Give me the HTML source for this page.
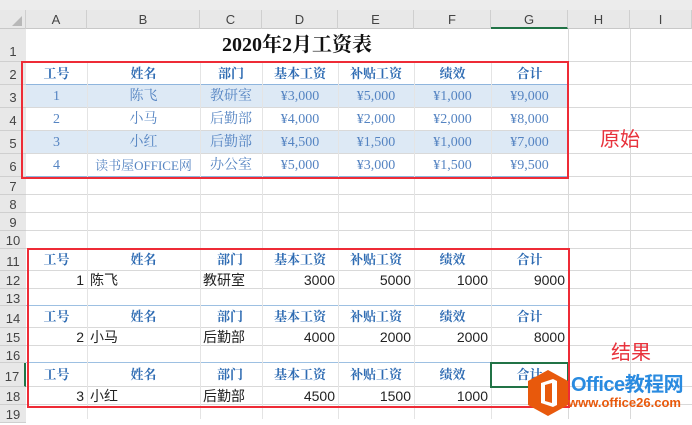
<!DOCTYPE html>
<html><head><meta charset="utf-8">
<style>
*{margin:0;padding:0;box-sizing:border-box}
body{width:692px;height:419px;overflow:hidden;background:#fff;position:relative;font-family:"Liberation Sans","Noto Sans CJK SC",sans-serif}
div{position:absolute}
.h{height:1px;left:26px;width:666px;background:#d9d9d9}
.b{height:1px;left:26px;width:542px}
.v{width:1px;top:29px;height:390px;background:#d9d9d9}
.ch{top:10px;height:19px;font-size:13px;color:#444;text-align:center;line-height:19px;border-right:1px solid #cfcfcf}
.rh{left:0;width:26px;font-size:13px;color:#444;text-align:center;background:#e8e8e8;border-bottom:1px solid #cfcfcf}
.c{font-family:"Liberation Serif","Noto Serif CJK SC",serif;font-size:14px;color:#5584c2;text-align:center;height:23px;line-height:23px;white-space:nowrap}
.hb{font-family:"Liberation Serif","Noto Serif CJK SC",serif;font-weight:bold;font-size:13px;color:#2f6cb3;text-align:center;white-space:nowrap}
.d{font-size:14px;color:#222;white-space:nowrap;height:18px;line-height:18px}
.r{text-align:right}
</style></head><body>
<div style="left:0;top:0;width:692px;height:10px;background:#ececec"></div>
<div style="left:0;top:10px;width:692px;height:19px;background:#e8e8e8;border-bottom:1px solid #c8c8c8"></div>
<div style="left:0;top:10px;width:26px;height:19px;border-right:1px solid #cfcfcf"></div>
<div style="left:12px;top:16px;width:0;height:0;border-left:10px solid transparent;border-bottom:10px solid #b8b8b8"></div>
<div class="ch" style="left:26px;width:61px">A</div>
<div class="ch" style="left:87px;width:113px">B</div>
<div class="ch" style="left:200px;width:62px">C</div>
<div class="ch" style="left:262px;width:76px">D</div>
<div class="ch" style="left:338px;width:76px">E</div>
<div class="ch" style="left:414px;width:77px">F</div>
<div class="ch" style="left:491px;width:77px;border-bottom:2px solid #217346">G</div>
<div class="ch" style="left:568px;width:62px">H</div>
<div class="ch" style="left:630px;width:62px">I</div>

<div class="rh" style="top:29px;height:33px;line-height:46px">1</div>
<div class="rh" style="top:62px;height:23px;line-height:26px">2</div>
<div class="rh" style="top:85px;height:23px;line-height:26px">3</div>
<div class="rh" style="top:108px;height:23px;line-height:26px">4</div>
<div class="rh" style="top:131px;height:23px;line-height:26px">5</div>
<div class="rh" style="top:154px;height:23px;line-height:26px">6</div>
<div class="rh" style="top:177px;height:18px;line-height:20px">7</div>
<div class="rh" style="top:195px;height:18px;line-height:20px">8</div>
<div class="rh" style="top:213px;height:18px;line-height:20px">9</div>
<div class="rh" style="top:231px;height:18px;line-height:20px">10</div>
<div class="rh" style="top:249px;height:22px;line-height:26px">11</div>
<div class="rh" style="top:271px;height:18px;line-height:20px">12</div>
<div class="rh" style="top:289px;height:17px;line-height:20px">13</div>
<div class="rh" style="top:306px;height:22px;line-height:26px">14</div>
<div class="rh" style="top:328px;height:18px;line-height:20px">15</div>
<div class="rh" style="top:346px;height:17px;line-height:20px">16</div>
<div class="rh" style="top:363px;height:24px;line-height:28px;border-right:2px solid #217346">17</div>
<div class="rh" style="top:387px;height:18px;line-height:20px">18</div>
<div class="rh" style="top:405px;height:18px;line-height:20px">19</div>

<div style="left:26px;top:85px;width:542px;height:23px;background:#dde9f5"></div>
<div style="left:26px;top:131px;width:542px;height:23px;background:#dde9f5"></div>

<div class="h" style="top:61px"></div>
<div class="h" style="top:84px"></div><div class="b" style="top:84px;background:#8fb5dd"></div>
<div class="h" style="top:107px"></div><div class="h" style="top:130px"></div><div class="h" style="top:153px"></div>
<div class="h" style="top:176px"></div><div class="b" style="top:176px;background:#8fb5dd"></div>
<div class="h" style="top:194px"></div><div class="h" style="top:212px"></div>
<div class="h" style="top:230px"></div><div class="h" style="top:248px"></div><div class="h" style="top:270px"></div>
<div class="h" style="top:288px"></div>
<div class="h" style="top:305px"></div><div class="b" style="top:305px;background:#9dc0e2"></div>
<div class="h" style="top:327px"></div>
<div class="h" style="top:345px"></div>
<div class="h" style="top:362px"></div><div class="b" style="top:362px;background:#9dc0e2"></div>
<div class="h" style="top:386px"></div>
<div class="h" style="top:404px"></div>
<div class="v" style="left:87px;top:62px;height:357px;background:#e4e4e4"></div>
<div class="v" style="left:200px;top:62px;height:357px;background:#e4e4e4"></div>
<div class="v" style="left:262px;top:62px;height:357px;background:#e4e4e4"></div>
<div class="v" style="left:338px;top:62px;height:357px;background:#e4e4e4"></div>
<div class="v" style="left:414px;top:62px;height:357px;background:#e4e4e4"></div>
<div class="v" style="left:491px;top:62px;height:357px;background:#e4e4e4"></div>
<div class="v" style="left:568px"></div><div class="v" style="left:630px"></div>

<div style="left:26px;top:31px;width:542px;text-align:center;font-family:'Liberation Serif','Noto Serif CJK SC',serif;font-weight:bold;font-size:20px;color:#111;line-height:28px">2020年2月工资表</div>

<div class="hb" style="left:26px;top:62px;width:61px;line-height:23px">工号</div>
<div class="hb" style="left:87px;top:62px;width:113px;line-height:23px">姓名</div>
<div class="hb" style="left:200px;top:62px;width:62px;line-height:23px">部门</div>
<div class="hb" style="left:262px;top:62px;width:76px;line-height:23px">基本工资</div>
<div class="hb" style="left:338px;top:62px;width:76px;line-height:23px">补贴工资</div>
<div class="hb" style="left:414px;top:62px;width:77px;line-height:23px">绩效</div>
<div class="hb" style="left:491px;top:62px;width:77px;line-height:23px">合计</div>

<div class="c" style="left:26px;top:85px;width:61px">1</div><div class="c" style="left:87px;top:85px;width:113px">陈飞</div><div class="c" style="left:200px;top:85px;width:62px">教研室</div><div class="c" style="left:262px;top:85px;width:76px">¥3,000</div><div class="c" style="left:338px;top:85px;width:76px">¥5,000</div><div class="c" style="left:414px;top:85px;width:77px">¥1,000</div><div class="c" style="left:491px;top:85px;width:77px">¥9,000</div>
<div class="c" style="left:26px;top:108px;width:61px">2</div><div class="c" style="left:87px;top:108px;width:113px">小马</div><div class="c" style="left:200px;top:108px;width:62px">后勤部</div><div class="c" style="left:262px;top:108px;width:76px">¥4,000</div><div class="c" style="left:338px;top:108px;width:76px">¥2,000</div><div class="c" style="left:414px;top:108px;width:77px">¥2,000</div><div class="c" style="left:491px;top:108px;width:77px">¥8,000</div>
<div class="c" style="left:26px;top:131px;width:61px">3</div><div class="c" style="left:87px;top:131px;width:113px">小红</div><div class="c" style="left:200px;top:131px;width:62px">后勤部</div><div class="c" style="left:262px;top:131px;width:76px">¥4,500</div><div class="c" style="left:338px;top:131px;width:76px">¥1,500</div><div class="c" style="left:414px;top:131px;width:77px">¥1,000</div><div class="c" style="left:491px;top:131px;width:77px">¥7,000</div>
<div class="c" style="left:26px;top:154px;width:61px">4</div><div class="c" style="left:87px;top:154px;width:113px;font-size:13px">读书屋OFFICE网</div><div class="c" style="left:200px;top:154px;width:62px">办公室</div><div class="c" style="left:262px;top:154px;width:76px">¥5,000</div><div class="c" style="left:338px;top:154px;width:76px">¥3,000</div><div class="c" style="left:414px;top:154px;width:77px">¥1,500</div><div class="c" style="left:491px;top:154px;width:77px">¥9,500</div>

<div class="hb" style="left:26px;top:249px;width:61px;line-height:22px">工号</div><div class="hb" style="left:87px;top:249px;width:113px;line-height:22px">姓名</div><div class="hb" style="left:217px;top:249px;line-height:22px">部门</div><div class="hb" style="left:262px;top:249px;width:76px;line-height:22px">基本工资</div><div class="hb" style="left:338px;top:249px;width:76px;line-height:22px">补贴工资</div><div class="hb" style="left:414px;top:249px;width:77px;line-height:22px">绩效</div><div class="hb" style="left:491px;top:249px;width:77px;line-height:22px">合计</div>
<div class="hb" style="left:26px;top:306px;width:61px;line-height:22px">工号</div><div class="hb" style="left:87px;top:306px;width:113px;line-height:22px">姓名</div><div class="hb" style="left:217px;top:306px;line-height:22px">部门</div><div class="hb" style="left:262px;top:306px;width:76px;line-height:22px">基本工资</div><div class="hb" style="left:338px;top:306px;width:76px;line-height:22px">补贴工资</div><div class="hb" style="left:414px;top:306px;width:77px;line-height:22px">绩效</div><div class="hb" style="left:491px;top:306px;width:77px;line-height:22px">合计</div>
<div class="hb" style="left:26px;top:363px;width:61px;line-height:24px">工号</div><div class="hb" style="left:87px;top:363px;width:113px;line-height:24px">姓名</div><div class="hb" style="left:217px;top:363px;line-height:24px">部门</div><div class="hb" style="left:262px;top:363px;width:76px;line-height:24px">基本工资</div><div class="hb" style="left:338px;top:363px;width:76px;line-height:24px">补贴工资</div><div class="hb" style="left:414px;top:363px;width:77px;line-height:24px">绩效</div><div class="hb" style="left:491px;top:363px;width:77px;line-height:24px">合计</div>

<div class="d r" style="left:26px;top:271px;width:58px">1</div><div class="d" style="left:90px;top:271px">陈飞</div><div class="d" style="left:203px;top:271px">教研室</div><div class="d r" style="left:262px;top:271px;width:73px">3000</div><div class="d r" style="left:338px;top:271px;width:73px">5000</div><div class="d r" style="left:414px;top:271px;width:74px">1000</div><div class="d r" style="left:491px;top:271px;width:74px">9000</div>
<div class="d r" style="left:26px;top:328px;width:58px">2</div><div class="d" style="left:90px;top:328px">小马</div><div class="d" style="left:203px;top:328px">后勤部</div><div class="d r" style="left:262px;top:328px;width:73px">4000</div><div class="d r" style="left:338px;top:328px;width:73px">2000</div><div class="d r" style="left:414px;top:328px;width:74px">2000</div><div class="d r" style="left:491px;top:328px;width:74px">8000</div>
<div class="d r" style="left:26px;top:387px;width:58px">3</div><div class="d" style="left:90px;top:387px">小红</div><div class="d" style="left:203px;top:387px">后勤部</div><div class="d r" style="left:262px;top:387px;width:73px">4500</div><div class="d r" style="left:338px;top:387px;width:73px">1500</div><div class="d r" style="left:414px;top:387px;width:74px">1000</div>

<div style="left:490px;top:362px;width:79px;height:26px;border:2px solid #217346"></div>

<div style="left:21px;top:61px;width:548px;height:118px;border:2px solid #ee2b36"></div>
<div style="left:27px;top:248px;width:543px;height:160px;border:2px solid #ee2b36"></div>
<div style="left:600px;top:127px;font-size:20px;color:#e8323c;line-height:26px">原始</div>
<div style="left:611px;top:340px;font-size:20px;color:#e8323c;line-height:26px">结果</div>

<svg style="position:absolute;left:526px;top:369px" width="44" height="48" viewBox="0 0 44 48">
<polygon points="22,1 42,12 42,36 22,47 2,36 2,12" fill="#e8590c"/>
<path d="M15 14 L27 10 L31 12 L31 36 L27 38 L15 34 Z M19 16 L19 32 L26 34 L26 14 Z" fill="#fff" fill-rule="evenodd"/>
</svg>
<div style="left:571px;top:373px;font-size:20px;font-weight:bold;color:#2a8be0;line-height:24px;letter-spacing:-0.5px">Office教程网</div>
<div style="left:568px;top:395px;font-size:13px;font-weight:bold;color:#e8590c;line-height:15px">www.office26.com</div>
</body></html>
